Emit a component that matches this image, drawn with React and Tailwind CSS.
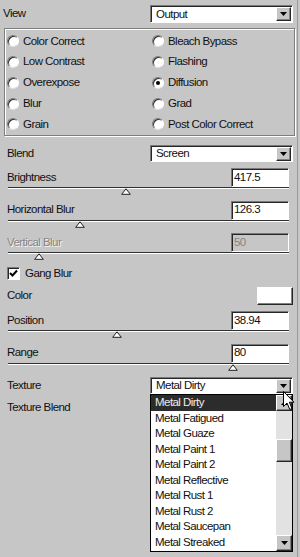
import React from "react";

const sunken =
  "border border-t-[#7a7a7a] border-l-[#7a7a7a] border-r-white border-b-white shadow-[inset_1px_1px_0_#262626]";
const raised =
  "border border-t-white border-l-white border-r-[#262626] border-b-[#262626] shadow-[inset_-1px_-1px_0_#808080]";

function Arrow({ up }) {
  return (
    <svg width="7" height="4" viewBox="0 0 7 4">
      {up ? (
        <polygon points="3.5,0 7,4 0,4" fill="#000" />
      ) : (
        <polygon points="0,0 7,0 3.5,4" fill="#000" />
      )}
    </svg>
  );
}

function Select({ value, h = "h-[18px]" }) {
  return (
    <div className={`w-[143px] ${h} bg-white ${sunken} flex items-center`}>
      <span className="flex-1 pl-[5px] pt-[1px] leading-none">{value}</span>
      <div
        className={`w-[15px] h-[14px] mr-[1px] bg-[#c6c6c6] ${raised} flex items-center justify-center`}
      >
        <Arrow />
      </div>
    </div>
  );
}

function Radio({ checked }) {
  return (
    <div
      className={`w-[12px] h-[12px] rounded-full bg-white border border-t-[#7a7a7a] border-l-[#7a7a7a] border-r-white border-b-[#e0e0e0] shadow-[inset_1px_1px_0_#303030] flex items-center justify-center shrink-0`}
    >
      {checked && <div className="w-[4px] h-[4px] rounded-full bg-black" />}
    </div>
  );
}

function RadioItem({ label, checked }) {
  return (
    <div className="h-[20.5px] flex items-center pl-[2px] gap-[4px]">
      <Radio checked={checked} />
      <span className="leading-none">{label}</span>
    </div>
  );
}

function SliderBlock({ label, value, thumb, disabled }) {
  return (
    <div className="h-[32.5px] flex flex-col">
      <div className="flex items-center h-[19px]">
        <span
          className={`w-[231px] pl-[7px] leading-none ${
            disabled ? "text-[#858585] [text-shadow:1px_1px_0_#f4f4f4]" : ""
          }`}
        >
          {label}
        </span>
        <div
          className={`w-[58px] h-[19px] ${sunken} ${
            disabled ? "bg-[#c6c6c6] text-[#858585]" : "bg-white"
          } flex items-center pl-[2px] leading-none`}
        >
          {value}
        </div>
      </div>
      <div className="relative ml-[8px] w-[281px] h-[2px] border-t border-t-[#303030] border-b border-b-white">
        <svg
          className="absolute top-0"
          style={{ left: thumb - 8 - 5 }}
          width="10"
          height="7"
          viewBox="0 0 10 7"
        >
          <polygon points="5,0.8 9.3,6.3 0.7,6.3" fill="#fff" stroke="#202020" strokeWidth="1" />
        </svg>
      </div>
    </div>
  );
}

const items = [
  "Metal Dirty",
  "Metal Fatigued",
  "Metal Guaze",
  "Metal Paint 1",
  "Metal Paint 2",
  "Metal Reflective",
  "Metal Rust 1",
  "Metal Rust 2",
  "Metal Saucepan",
  "Metal Streaked",
];

export default function App() {
  return (
    <div className="w-[300px] h-[557px] bg-[#c6c6c6] relative overflow-hidden text-[11.5px] tracking-[-0.55px] text-[#111] font-['Liberation_Sans',Arial,sans-serif]">
      <div className="w-[298px] h-full border-r border-r-[#9a9a9a] flex flex-col pt-[5px]">
        {/* View */}
        <div className="flex items-center h-[18px]">
          <span className="w-[150px] pl-[3px] leading-none">View</span>
          <Select value="Output" />
        </div>

        {/* Group box */}
        <div className="mt-[5px] ml-[4px] w-[291px] h-[108px] border border-[#7e7e7e] shadow-[1px_1px_0_#fff,inset_1px_1px_0_#fff] pt-[2px] grid grid-cols-[145px_1fr]">
          <RadioItem label="Color Correct" />
          <RadioItem label="Bleach Bypass" />
          <RadioItem label="Low Contrast" />
          <RadioItem label="Flashing" />
          <RadioItem label="Overexpose" />
          <RadioItem label="Diffusion" checked />
          <RadioItem label="Blur" />
          <RadioItem label="Grad" />
          <RadioItem label="Grain" />
          <RadioItem label="Post Color Correct" />
        </div>

        {/* Blend */}
        <div className="mt-[9px] flex items-center h-[17px]">
          <span className="w-[150px] pl-[7px] leading-none">Blend</span>
          <Select value="Screen" h="h-[17px]" />
        </div>

        <div className="mt-[6px]">
          <SliderBlock label="Brightness" value="417.5" thumb={126} />
          <SliderBlock label="Horizontal Blur" value="126.3" thumb={80} />
          <SliderBlock label="Vertical Blur" value="50" thumb={39} disabled />
        </div>

        {/* Gang Blur */}
        <div className="h-[16px] flex items-center pl-[7px] gap-[5px]">
          <div className={`w-[13px] h-[13px] bg-white ${sunken} flex items-center justify-center`}>
            <svg width="9" height="9" viewBox="0 0 9 9">
              <polyline points="1,4 3.5,6.5 8,1.5" fill="none" stroke="#000" strokeWidth="2" />
            </svg>
          </div>
          <span className="leading-none">Gang Blur</span>
        </div>

        {/* Color */}
        <div className="mt-[5.5px] h-[18px] flex items-center">
          <span className="w-[257px] pl-[7px] leading-none">Color</span>
          <div className={`w-[36px] h-[18px] bg-white ${raised}`} />
        </div>

        <div className="mt-[6px]">
          <SliderBlock label="Position" value="38.94" thumb={117} />
          <SliderBlock label="Range" value="80" thumb={233} />
        </div>

        {/* Texture */}
        <div className="mt-[1px] h-[17px] flex items-center">
          <span className="w-[150px] pl-[7px] leading-none">Texture</span>
          <div className="relative">
            <Select value="Metal Dirty" h="h-[17px]" />
            <div className="absolute top-full left-0 w-[143px] h-[158px] border border-black bg-white flex z-10">
              <div className="flex-1 flex flex-col">
                {items.map((it, i) => (
                  <div
                    key={it}
                    className={`h-[15.55px] flex items-center pl-[4px] leading-none ${
                      i === 0 ? "bg-[#2c2c2c] text-[#ececec]" : ""
                    }`}
                  >
                    {it}
                  </div>
                ))}
              </div>
              <div className="w-[16px] flex flex-col bg-[#e2e2e2]">
                <div className={`h-[16px] bg-[#c6c6c6] ${raised} flex items-center justify-center`}>
                  <Arrow up />
                </div>
                <div className="h-[28px]" />
                <div className={`h-[23px] bg-[#c6c6c6] ${raised}`} />
                <div className="flex-1" />
                <div className={`h-[16px] bg-[#c6c6c6] ${raised} flex items-center justify-center`}>
                  <Arrow />
                </div>
              </div>
            </div>
          </div>
        </div>

        {/* Texture Blend */}
        <div className="mt-[5px] h-[18px] flex items-center">
          <span className="pl-[7px] leading-none">Texture Blend</span>
        </div>
      </div>

      {/* mouse cursor */}
      <svg className="absolute left-[283px] top-[391px] z-20" width="13" height="20" viewBox="0 0 13 20">
        <path
          d="M0.5 0.5 L0.5 15.5 L4 12 L6.8 18.5 L9 17.5 L6.3 11.2 L11 11.2 Z"
          fill="#fff"
          stroke="#000"
          strokeWidth="1"
          strokeLinejoin="miter"
        />
      </svg>
    </div>
  );
}
